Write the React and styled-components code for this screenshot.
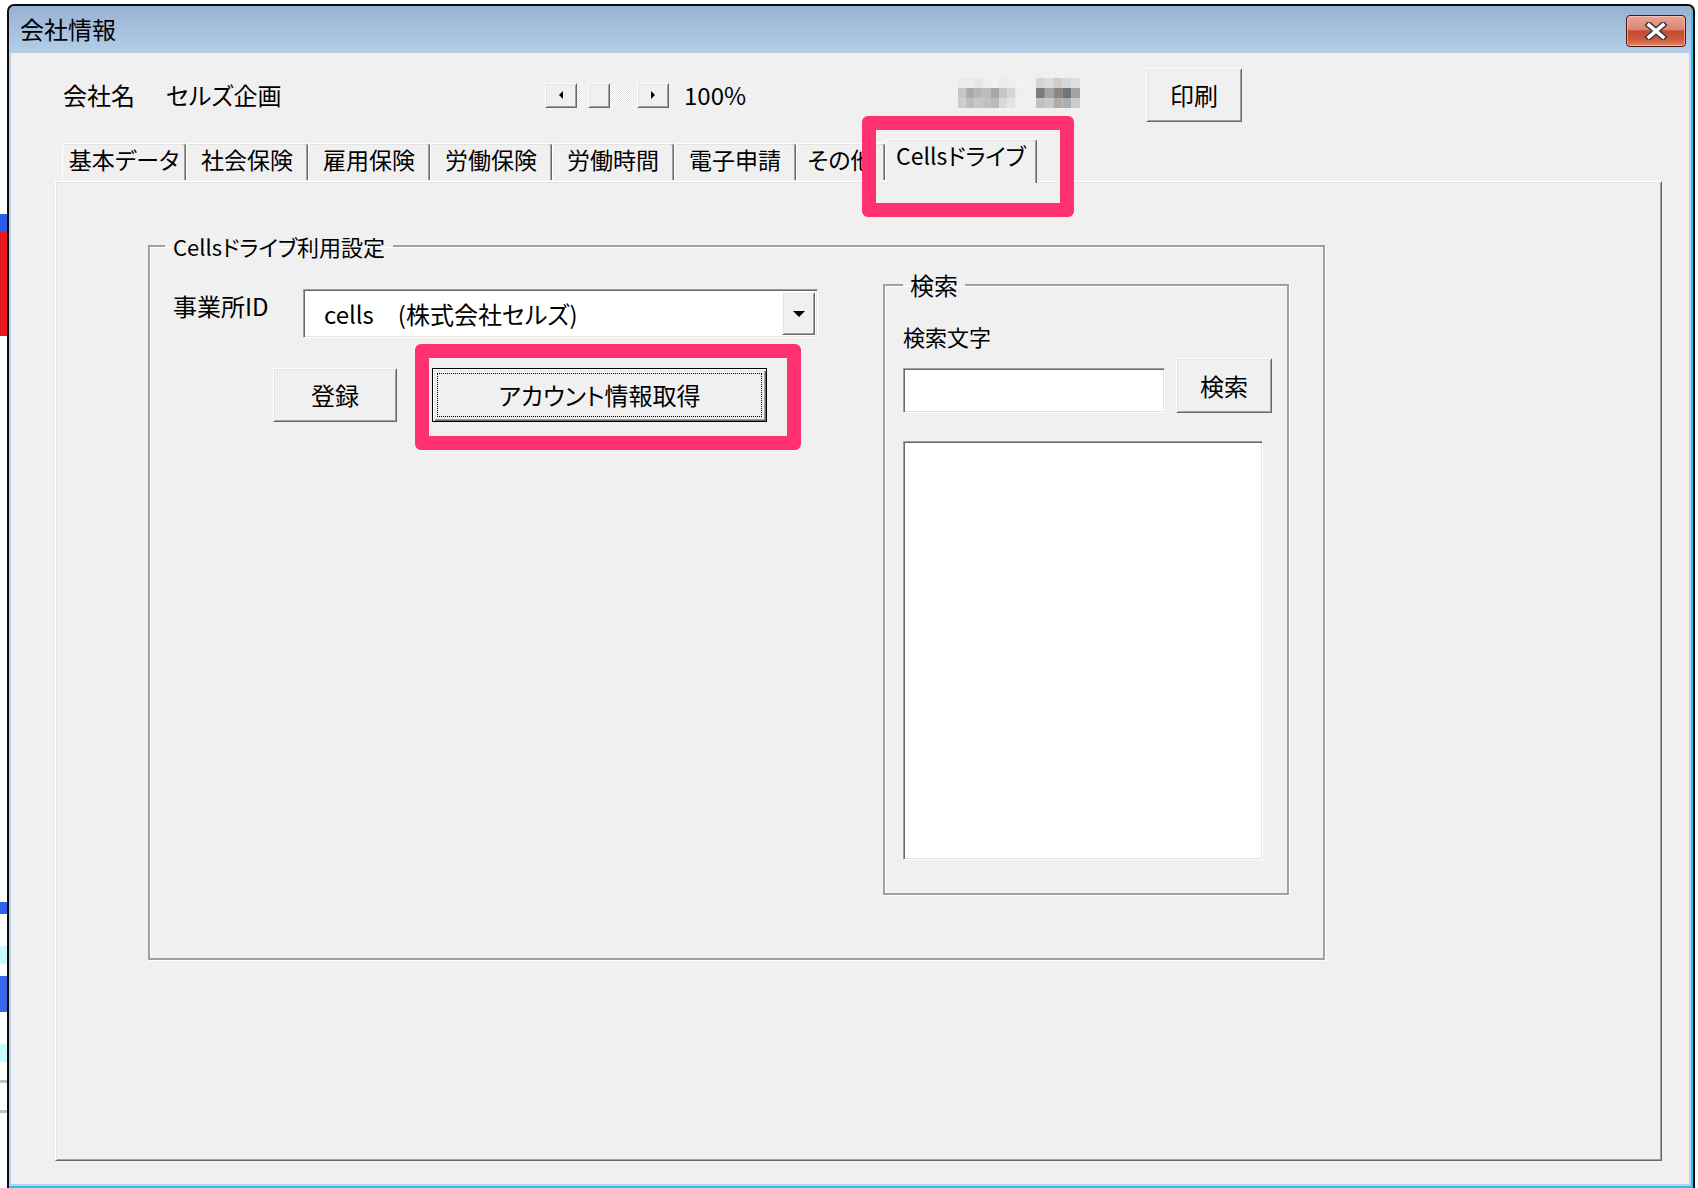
import React from "react";
import styled, { createGlobalStyle } from "styled-components";

const GlobalStyle = createGlobalStyle`
  html, body {
    margin: 0;
    padding: 0;
    background: #fff;
  }
  body {
    font-family: "Noto Sans CJK JP", "Noto Sans", sans-serif;
    font-feature-settings: "palt";
    color: #000;
  }
  * {
    box-sizing: border-box;
  }
`;

const tabs = [
  { label: "基本データ", w: 124 },
  { label: "社会保険", w: 122 },
  { label: "雇用保険", w: 122 },
  { label: "労働保険", w: 122 },
  { label: "労働時間", w: 122 },
  { label: "電子申請", w: 122 },
  { label: "その他", w: 89 },
  { label: "Cellsドライブ", w: 152, active: true },
];

const stripBits = [
  { h: 214, c: "#fff" },
  { h: 18, c: "#2a5de8" },
  { h: 104, c: "#e8191c" },
  { h: 566, c: "#fff" },
  { h: 12, c: "#2f62f0" },
  { h: 32, c: "#fff" },
  { h: 18, c: "#c8fbfb" },
  { h: 12, c: "#fff" },
  { h: 36, c: "#3a66ee" },
  { h: 32, c: "#fff" },
  { h: 18, c: "#c8fbfb" },
  { h: 18, c: "#fff" },
  { h: 3, c: "#c0c0c0" },
  { h: 27, c: "#fff" },
  { h: 3, c: "#c0c0c0" },
];

const mosaicA = [
  ["#eaeaea", "#ececec", "#e6e6e6", "#eeeeee", "#f0f0f0", "#ebebeb", "#eeeeee", "#f2f2f2"],
  ["#c9c5c3", "#a9a9a9", "#b5b5b3", "#bdbdbd", "#a6a6a6", "#c4c6c8", "#d3d7da", "#eeeeee"],
  ["#d1cdca", "#bcbcbc", "#c6c6c6", "#c0c0c0", "#b9b9b9", "#d6dadd", "#e2e4e6", "#f0f0f0"],
];
const mosaicB = [
  ["#d6d4d3", "#dcdcdc", "#d0cbc8", "#d7d7d7", "#dedede"],
  ["#807b79", "#a4a4a9", "#8f857d", "#6f747b", "#9ea3a8"],
  ["#c5bfbd", "#c7c8cb", "#b3aba5", "#a9afb5", "#c9cdd0"],
];

function Mosaic() {
  return (
    <svg width="122" height="30" viewBox="0 0 122 30">
      {mosaicA.map((row, r) =>
        row.map((c, i) => (
          <rect key={`a${r}-${i}`} x={i * 8.2} y={r * 10} width="8.3" height="10" fill={c} />
        ))
      )}
      {mosaicB.map((row, r) =>
        row.map((c, i) => (
          <rect key={`b${r}-${i}`} x={78 + i * 8.8} y={r * 10} width="8.9" height="10" fill={c} />
        ))
      )}
    </svg>
  );
}

export default function App() {
  return (
    <>
      <GlobalStyle />
      <Desktop>
        <SideStrip>
          {stripBits.map((b, i) => (
            <StripBit key={i} $h={b.h} $c={b.c} />
          ))}
        </SideStrip>
        <Window>
          <TitleBar>
            <Title>会社情報</Title>
            <CloseButton aria-label="閉じる">
              <svg width="26" height="18" viewBox="0 0 26 18">
                <path d="M6 3 L20 15 M20 3 L6 15" stroke="#3c3c48" strokeWidth="6.5" strokeLinecap="square" />
                <path d="M6 3 L20 15 M20 3 L6 15" stroke="#fff" strokeWidth="3.5" strokeLinecap="square" />
              </svg>
            </CloseButton>
          </TitleBar>
          <Client>
            <HeaderRow>
              <HeaderText>会社名</HeaderText>
              <HeaderText>セルズ企画</HeaderText>
              <ScrollBar>
                <ArrowButton>
                  <Arrow $dir="left" />
                </ArrowButton>
                <Thumb />
                <ArrowButton $end>
                  <Arrow $dir="right" />
                </ArrowButton>
              </ScrollBar>
              <HeaderText>100%</HeaderText>
              <MosaicBox>
                <Mosaic />
              </MosaicBox>
              <Button $w={96} $h={54}>印刷</Button>
            </HeaderRow>

            <TabStrip>
              {tabs.map((t) => (
                <Tab key={t.label} $w={t.w} $active={t.active}>
                  {t.label}
                </Tab>
              ))}
            </TabStrip>

            <Panel>
              <GroupBox $w={1177} $h={729}>
                <Legend $size={22} $pad={8}>Cellsドライブ利用設定</Legend>
                <LeftColumn>
                  <FieldRow>
                    <FieldLabel>事業所ID</FieldLabel>
                    <Combo>
                      <ComboText>cells　(株式会社セルズ)</ComboText>
                      <DropButton>
                        <Arrow $dir="down" />
                      </DropButton>
                    </Combo>
                  </FieldRow>
                  <ButtonRow>
                    <Button $w={124} $h={54}>登録</Button>
                    <Button $w={335} $h={54} $focused $marked>
                      <FocusRing>アカウント情報取得</FocusRing>
                    </Button>
                  </ButtonRow>
                </LeftColumn>

                <SearchGroup $w={406} $h={625}>
                  <Legend $size={24} $pad={7}>検索</Legend>
                  <SearchLabel>検索文字</SearchLabel>
                  <SearchRow>
                    <TextBox $w={262} $h={45} />
                    <Button $w={96} $h={55}>検索</Button>
                  </SearchRow>
                  <ListBox $w={360} $h={419} />
                </SearchGroup>
              </GroupBox>
            </Panel>
          </Client>
        </Window>
      </Desktop>
    </>
  );
}

const Desktop = styled.div`
  width: 1698px;
  height: 1188px;
  display: flex;
  background: #fff;
  overflow: hidden;
`;

const SideStrip = styled.div`
  width: 7px;
  flex-shrink: 0;
  display: flex;
  flex-direction: column;
`;

const StripBit = styled.div`
  height: ${(p) => p.$h}px;
  background: ${(p) => p.$c};
  flex-shrink: 0;
`;

const Window = styled.div`
  margin-top: 4px;
  width: 1688px;
  height: 1186px;
  flex-shrink: 0;
  display: flex;
  flex-direction: column;
  border: 2px solid #0c0c0c;
  border-radius: 7px 7px 0 0;
  background: linear-gradient(to bottom, #97b2d1 0, #b5cee8 47px, #b9d1ea 47px);
  box-shadow: inset -2px -2px 0 #2cc4ec;
  padding: 0 4px 4px 2px;
`;

const TitleBar = styled.div`
  height: 47px;
  flex-shrink: 0;
  display: flex;
  justify-content: space-between;
  align-items: flex-start;
  padding-left: 9px;
`;

const Title = styled.div`
  margin-top: 8px;
  font-size: 24px;
  line-height: 30px;
  color: #000;
`;

const CloseButton = styled.div`
  margin-top: 9px;
  margin-right: 3px;
  width: 60px;
  height: 32px;
  border: 1px solid #4a1414;
  border-radius: 4px;
  background: linear-gradient(to bottom, #eaa696 0, #dc8270 45%, #c54a2f 50%, #cf5a3e 80%, #e08a6e 100%);
  box-shadow: inset 0 0 0 1px rgba(255, 210, 200, 0.6);
  display: flex;
  align-items: center;
  justify-content: center;
`;

const Client = styled.div`
  flex: 1;
  background: #f0f0f0;
  display: flex;
  flex-direction: column;
`;

const HeaderRow = styled.div`
  margin-top: 15px;
  height: 54px;
  padding-left: 52px;
  display: grid;
  grid-template-columns: 103px 379px 139px 274px 188px 96px;
  align-items: center;
`;

const HeaderText = styled.div`
  font-size: 24px;
  line-height: 30px;
  white-space: nowrap;
`;

const ScrollBar = styled.div`
  width: 124px;
  height: 25px;
  display: flex;
  background: repeating-conic-gradient(#ffffff 0 25%, #e4e4e4 0 50%) 0 0 / 2px 2px;
`;

const raised = `
  background: #f0f0f0;
  border: 1px solid;
  border-color: #ffffff #696969 #696969 #ffffff;
  box-shadow: inset 1px 1px 0 #e3e3e3, inset -1px -1px 0 #a0a0a0;
`;

const sunken = `
  border: 1px solid;
  border-color: #a0a0a0 #ffffff #ffffff #a0a0a0;
  box-shadow: inset 1px 1px 0 #696969, inset -1px -1px 0 #e3e3e3;
`;

const ArrowButton = styled.div`
  ${raised}
  width: 32px;
  height: 25px;
  display: flex;
  align-items: center;
  justify-content: center;
  margin-left: ${(p) => (p.$end ? "auto" : "0")};
`;

const Thumb = styled.div`
  ${raised}
  width: 22px;
  height: 25px;
  margin-left: 11px;
`;

const Arrow = styled.span`
  width: 0;
  height: 0;
  border-style: solid;
  border-color: transparent;
  ${(p) =>
    p.$dir === "left"
      ? "border-width: 4px 4px 4px 0; border-right-color: #000;"
      : p.$dir === "right"
      ? "border-width: 4px 0 4px 4px; border-left-color: #000;"
      : "border-width: 6px 6px 0 6px; border-top-color: #000;"}
`;

const MosaicBox = styled.div`
  height: 30px;
  align-self: center;
  margin-top: -4px;
  display: flex;
`;

const Button = styled.button`
  ${raised}
  position: relative;
  width: ${(p) => p.$w}px;
  height: ${(p) => p.$h}px;
  padding: 0;
  font-family: inherit;
  font-feature-settings: "palt";
  font-size: 24px;
  line-height: 30px;
  color: #000;
  display: flex;
  align-items: center;
  justify-content: center;
  flex-shrink: 0;
  ${(p) =>
    p.$focused &&
    `
    border: 1px solid #000;
    box-shadow: inset 1px 1px 0 #ffffff, inset 2px 2px 0 #e3e3e3, inset -1px -1px 0 #696969, inset -2px -2px 0 #a0a0a0;
    padding: 4px;
    align-items: stretch;
  `}
  ${(p) =>
    p.$marked &&
    `
    &::after {
      content: "";
      position: absolute;
      left: -18px;
      top: -25px;
      right: -35px;
      bottom: -29px;
      border: 14px solid #ff3170;
      border-radius: 6px;
      pointer-events: none;
    }
  `}
`;

const FocusRing = styled.span`
  flex: 1;
  border: 1px dotted #000;
  display: flex;
  align-items: center;
  justify-content: center;
`;

const TabStrip = styled.div`
  margin-top: 17px;
  height: 42px;
  padding-left: 51px;
  display: flex;
  align-items: flex-end;
  position: relative;
  z-index: 2;
`;

const Tab = styled.div`
  position: relative;
  width: ${(p) => p.$w}px;
  height: ${(p) => (p.$active ? 44 : 37)}px;
  margin-bottom: ${(p) => (p.$active ? -2 : 1)}px;
  flex-shrink: 0;
  background: #f0f0f0;
  border-top: 1px solid #ffffff;
  border-left: 1px solid #ffffff;
  border-right: 1px solid #696969;
  box-shadow: inset -1px 0 0 #a0a0a0, inset 0 1px 0 #e3e3e3;
  border-radius: 3px 3px 0 0;
  font-size: 23px;
  line-height: 30px;
  padding-top: 0;
  text-align: center;
  white-space: nowrap;
  overflow: hidden;
  ${(p) =>
    p.$active &&
    `
    overflow: visible;
    &::after {
      content: "";
      position: absolute;
      left: -24px;
      top: -24px;
      right: -38px;
      bottom: -34px;
      border: 14px solid #ff3170;
      border-radius: 6px;
      pointer-events: none;
    }
  `}
`;

const Panel = styled.div`
  flex: 1;
  margin: 0 27px 23px 44px;
  border: 1px solid;
  border-color: #ffffff #696969 #696969 #ffffff;
  box-shadow: inset 1px 1px 0 #e3e3e3, inset -1px -1px 0 #a0a0a0;
  padding: 49px 0 0 92px;
`;

const GroupBox = styled.fieldset`
  width: ${(p) => p.$w}px;
  height: ${(p) => p.$h}px;
  margin: 0;
  padding: 0 0 0 15px;
  border: 2px solid #a0a0a0;
  box-shadow: inset 1px 1px 0 #ffffff, 1px 1px 0 #ffffff;
  display: flex;
  align-items: flex-start;
`;

const Legend = styled.legend`
  padding: 0 ${(p) => p.$pad}px;
  font-size: ${(p) => p.$size}px;
  line-height: 30px;
`;

const LeftColumn = styled.div`
  width: 710px;
  margin-left: 8px;
  margin-top: 28px;
  display: flex;
  flex-direction: column;
`;

const FieldRow = styled.div`
  display: flex;
  align-items: flex-start;
`;

const FieldLabel = styled.div`
  width: 130px;
  font-size: 24px;
  line-height: 30px;
  padding-top: 2px;
`;

const Combo = styled.div`
  ${sunken}
  background: #fff;
  width: 515px;
  height: 49px;
  display: flex;
  align-items: center;
`;

const ComboText = styled.div`
  flex: 1;
  padding-left: 20px;
  font-size: 24px;
  line-height: 30px;
  white-space: nowrap;
`;

const DropButton = styled.div`
  ${raised}
  width: 33px;
  height: 43px;
  margin-right: 2px;
  display: flex;
  align-items: center;
  justify-content: center;
`;

const ButtonRow = styled.div`
  margin-top: 30px;
  margin-left: 100px;
  display: flex;
  gap: 35px;
`;

const SearchGroup = styled(GroupBox)`
  margin-top: 9px;
  padding: 0 0 0 18px;
  flex-direction: column;
`;

const SearchLabel = styled.div`
  margin-top: 21px;
  font-size: 22px;
  line-height: 30px;
`;

const SearchRow = styled.div`
  margin-top: 7px;
  display: flex;
  align-items: flex-end;
  gap: 11px;
`;

const TextBox = styled.div`
  ${sunken}
  background: #fff;
  width: ${(p) => p.$w}px;
  height: ${(p) => p.$h}px;
  margin-bottom: 0;
`;

const ListBox = styled(TextBox)`
  margin-top: 28px;
`;
